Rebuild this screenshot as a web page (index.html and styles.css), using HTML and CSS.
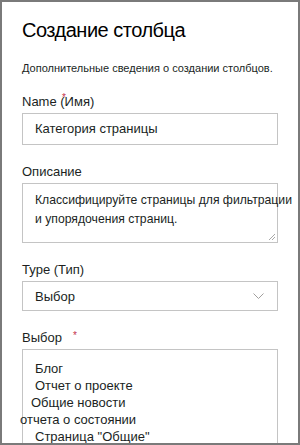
FILE: index.html
```html
<!DOCTYPE html>
<html lang="ru">
<head>
    <meta charset="UTF-8">
    <meta name="viewport" content="width=device-width, initial-scale=1.0">
    <title>Создание столбца</title>
    <link rel="stylesheet" href="styles.css">
</head>
<body>
    <div class="panel">
        <h1 class="title">Создание столбца</h1>
        <p class="intro">Дополнительные сведения о создании столбцов.</p>

        <div class="form-group">
            <div class="label">Name (Имя)<span class="req req-name">*</span></div>
            <div class="field field-input">Категория страницы</div>
        </div>

        <div class="form-group">
            <div class="label">Описание</div>
            <div class="field field-area">
                <div>Классифицируйте страницы для фильтрации</div>
                <div>и упорядочения страниц.</div>
                <svg class="grip" width="8" height="8" viewBox="0 0 8 8">
                    <path d="M1 7 L7 1 M4 7 L7 4" stroke="#a8a8a8" stroke-width="1" fill="none"/>
                </svg>
            </div>
        </div>

        <div class="form-group">
            <div class="label">Type (Тип)</div>
            <div class="field field-select">
                <span>Выбор</span>
                <svg class="chevron" width="11" height="6" viewBox="0 0 11 6">
                    <path d="M0.5 0.5 L5.5 5.5 L10.5 0.5" stroke="#a19f9d" stroke-width="1" fill="none"/>
                </svg>
            </div>
        </div>

        <div class="form-group">
            <div class="label">Выбор<span class="req req-choice">*</span></div>
            <div class="field field-choices">
                <div class="choice">Блог</div>
                <div class="choice">Отчет о проекте</div>
                <div class="choice shift-1">Общие новости</div>
                <div class="choice shift-2">отчета о состоянии</div>
                <div class="choice">Страница "Общие"</div>
            </div>
        </div>
    </div>
</body>
</html>
```

FILE: styles.css
```css
body {
    margin: 0;
    font-family: "Liberation Sans", Arial, sans-serif;
    color: #201f1e;
}
.panel {
    width: 300px;
    height: 445px;
    box-sizing: border-box;
    border: 2px solid #7a7a7a;
    padding: 14px 20px 0 20px;
    overflow: hidden;
    background: #fff;
}
.title {
    margin: 0 0 16px 0;
    font-size: 20px;
    font-weight: normal;
    line-height: 28px;
    letter-spacing: -0.5px;
    color: #000;
}
.intro {
    margin: 0 0 16px 0;
    font-size: 11px;
    line-height: 16px;
}
.form-group {
    margin-bottom: 17px;
}
.label {
    position: relative;
    font-size: 13px;
    line-height: 20px;
    margin-bottom: 1px;
}
.req {
    position: absolute;
    color: #c4314b;
    font-size: 10px;
    line-height: 10px;
}
.req-name {
    left: 40px;
    top: 1px;
}
.req-choice {
    left: 51px;
    top: 3px;
}
.field {
    position: relative;
    border: 1px solid #c4c4c4;
    font-size: 13px;
    white-space: nowrap;
}
.field-input {
    height: 30px;
    line-height: 30px;
    padding-left: 12px;
}
.field-area {
    padding: 7px 0 0 12px;
    height: 51px;
    font-size: 12.2px;
    line-height: 19px;
}
.grip {
    position: absolute;
    right: 1px;
    bottom: 1px;
}
.field-select {
    display: flex;
    align-items: center;
    justify-content: space-between;
    height: 28px;
    padding: 0 13px 0 12px;
}
.field-choices {
    height: 120px;
    padding-top: 10px;
    line-height: 17px;
}
.choice {
    padding-left: 12px;
}
.choice.shift-1 {
    padding-left: 8px;
}
.choice.shift-2 {
    padding-left: 0;
    margin-left: -3px;
}
```
